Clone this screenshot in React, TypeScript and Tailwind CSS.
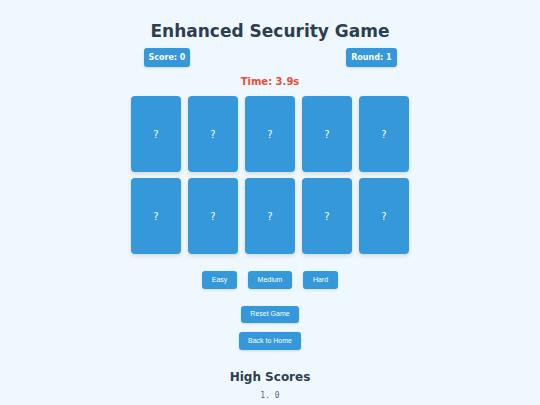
import React from 'react';

const cards = Array.from({ length: 10 }, (_, i) => i);

const App: React.FC = () => {
  return (
    <div className="min-h-[405px] w-full bg-[#f0f8ff] flex flex-col items-center pt-[20px] text-[#2c3e50] font-['DejaVu_Sans',sans-serif]">
      <h1 className="text-[17px] leading-[22px] font-bold">Enhanced Security Game</h1>

      <div className="w-[253px] mt-[6px] flex justify-between">
        <div className="h-[19px] px-[5px] flex items-center rounded-[3px] bg-[#3498db] text-white text-[8px] font-bold shadow-sm">
          Score: 0
        </div>
        <div className="h-[19px] px-[5px] flex items-center rounded-[3px] bg-[#3498db] text-white text-[8px] font-bold shadow-sm">
          Round: 1
        </div>
      </div>

      <div className="mt-[8px] h-[13px] leading-[13px] text-[10px] font-bold text-[#e74c3c]">Time: 3.9s</div>

      <div className="mt-[8px] grid grid-cols-5 gap-x-[7px] gap-y-[6px]">
        {cards.map((c) => (
          <div
            key={c}
            className="w-[50px] h-[76px] rounded-[4px] bg-[#3498db] text-white text-[10px] flex items-center justify-center shadow-[0_2px_4px_rgba(0,0,0,0.12)]"
          >
            ?
          </div>
        ))}
      </div>

      <div className="mt-[17px] flex gap-[11px] font-['Liberation_Sans',Arial,sans-serif]">
        <button type="button" className="w-[35px] h-[18px] rounded-[3px] bg-[#3498db] text-white text-[7px] shadow-sm">
          Easy
        </button>
        <button type="button" className="w-[44px] h-[18px] rounded-[3px] bg-[#3498db] text-white text-[7px] shadow-sm">
          Medium
        </button>
        <button type="button" className="w-[35px] h-[18px] rounded-[3px] bg-[#3498db] text-white text-[7px] shadow-sm">
          Hard
        </button>
      </div>

      <div className="mt-[17px] flex flex-col items-center gap-[9px] font-['Liberation_Sans',Arial,sans-serif]">
        <button type="button" className="w-[58px] h-[17px] rounded-[3px] bg-[#3498db] text-white text-[7px] shadow-sm">
          Reset Game
        </button>
        <button type="button" className="w-[62px] h-[18px] rounded-[3px] bg-[#3498db] text-white text-[7px] shadow-sm">
          Back to Home
        </button>
      </div>

      <h2 className="mt-[20px] text-[12px] leading-[15px] font-bold">High Scores</h2>
      <div className="mt-[6px] text-[8px] leading-[10px] text-[#666] font-['DejaVu_Sans_Mono',monospace]">1. 0</div>
    </div>
  );
};

export default App;
